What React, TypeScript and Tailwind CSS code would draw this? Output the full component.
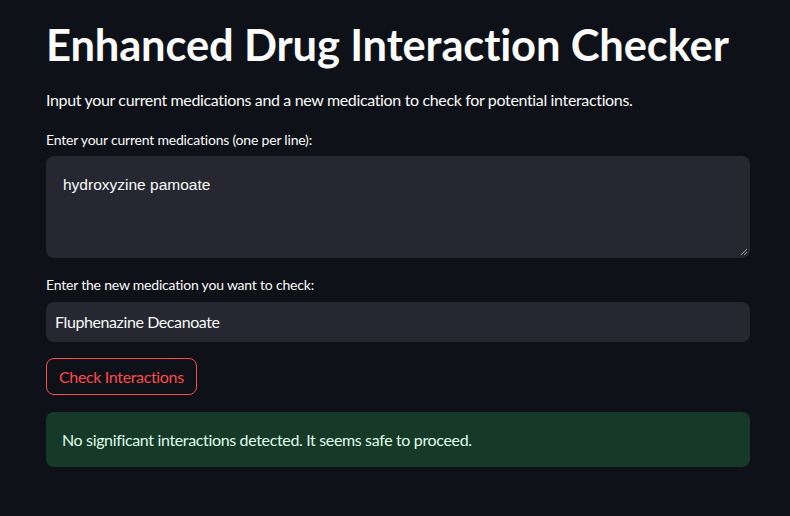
import React from "react";

export default function App() {
  return (
    <div className="min-h-[516px] w-full bg-[#0e1117] text-[#fafafa] tracking-[-0.35px]" style={{ fontFamily: "Lato, 'Noto Sans', sans-serif" }}>
      <div className="pl-[46px] pr-[40px] pt-[16px]">
        <h1 className="text-[43.5px] font-bold leading-[56px] tracking-[-0.15px] text-[#fafafa]">Enhanced Drug Interaction Checker</h1>
        <p className="mt-[16px] text-[16px] leading-[24px]">Input your current medications and a new medication to check for potential interactions.</p>

        <label className="mt-[18px] block text-[14px] leading-[20px] tracking-[-0.2px]">Enter your current medications (one per line):</label>
        <div className="relative mt-[6px] h-[102px] rounded-[8px] bg-[#262730]">
          <div className="px-[17px] pt-[18px] text-[15.5px] leading-[22px] tracking-normal" style={{ fontFamily: "'Liberation Sans', Arial, sans-serif" }}>hydroxyzine pamoate</div>
          <svg className="absolute bottom-[2px] right-[2px]" width="8" height="8" viewBox="0 0 8 8">
            <path d="M7 1 L1 7 M7 4 L4 7" stroke="#9a9aa2" strokeWidth="1" />
          </svg>
        </div>

        <label className="mt-[17px] block text-[14px] leading-[20px] tracking-[-0.2px]">Enter the new medication you want to check:</label>
        <div className="mt-[7px] flex h-[40px] items-center rounded-[8px] bg-[#262730] px-[9px] text-[16px] tracking-[-0.4px]">Fluphenazine Decanoate</div>

        <button className="mt-[16px] h-[37px] rounded-[8px] border border-[#ff4b4b] bg-transparent px-[12px] text-[16px] text-[#ff4b4b]">Check Interactions</button>

        <div className="mt-[17px] flex h-[55px] items-center rounded-[8px] bg-[#173928] px-[16px] text-[16px] text-[#dffde9]">
          No significant interactions detected. It seems safe to proceed.
        </div>
      </div>
    </div>
  );
}
